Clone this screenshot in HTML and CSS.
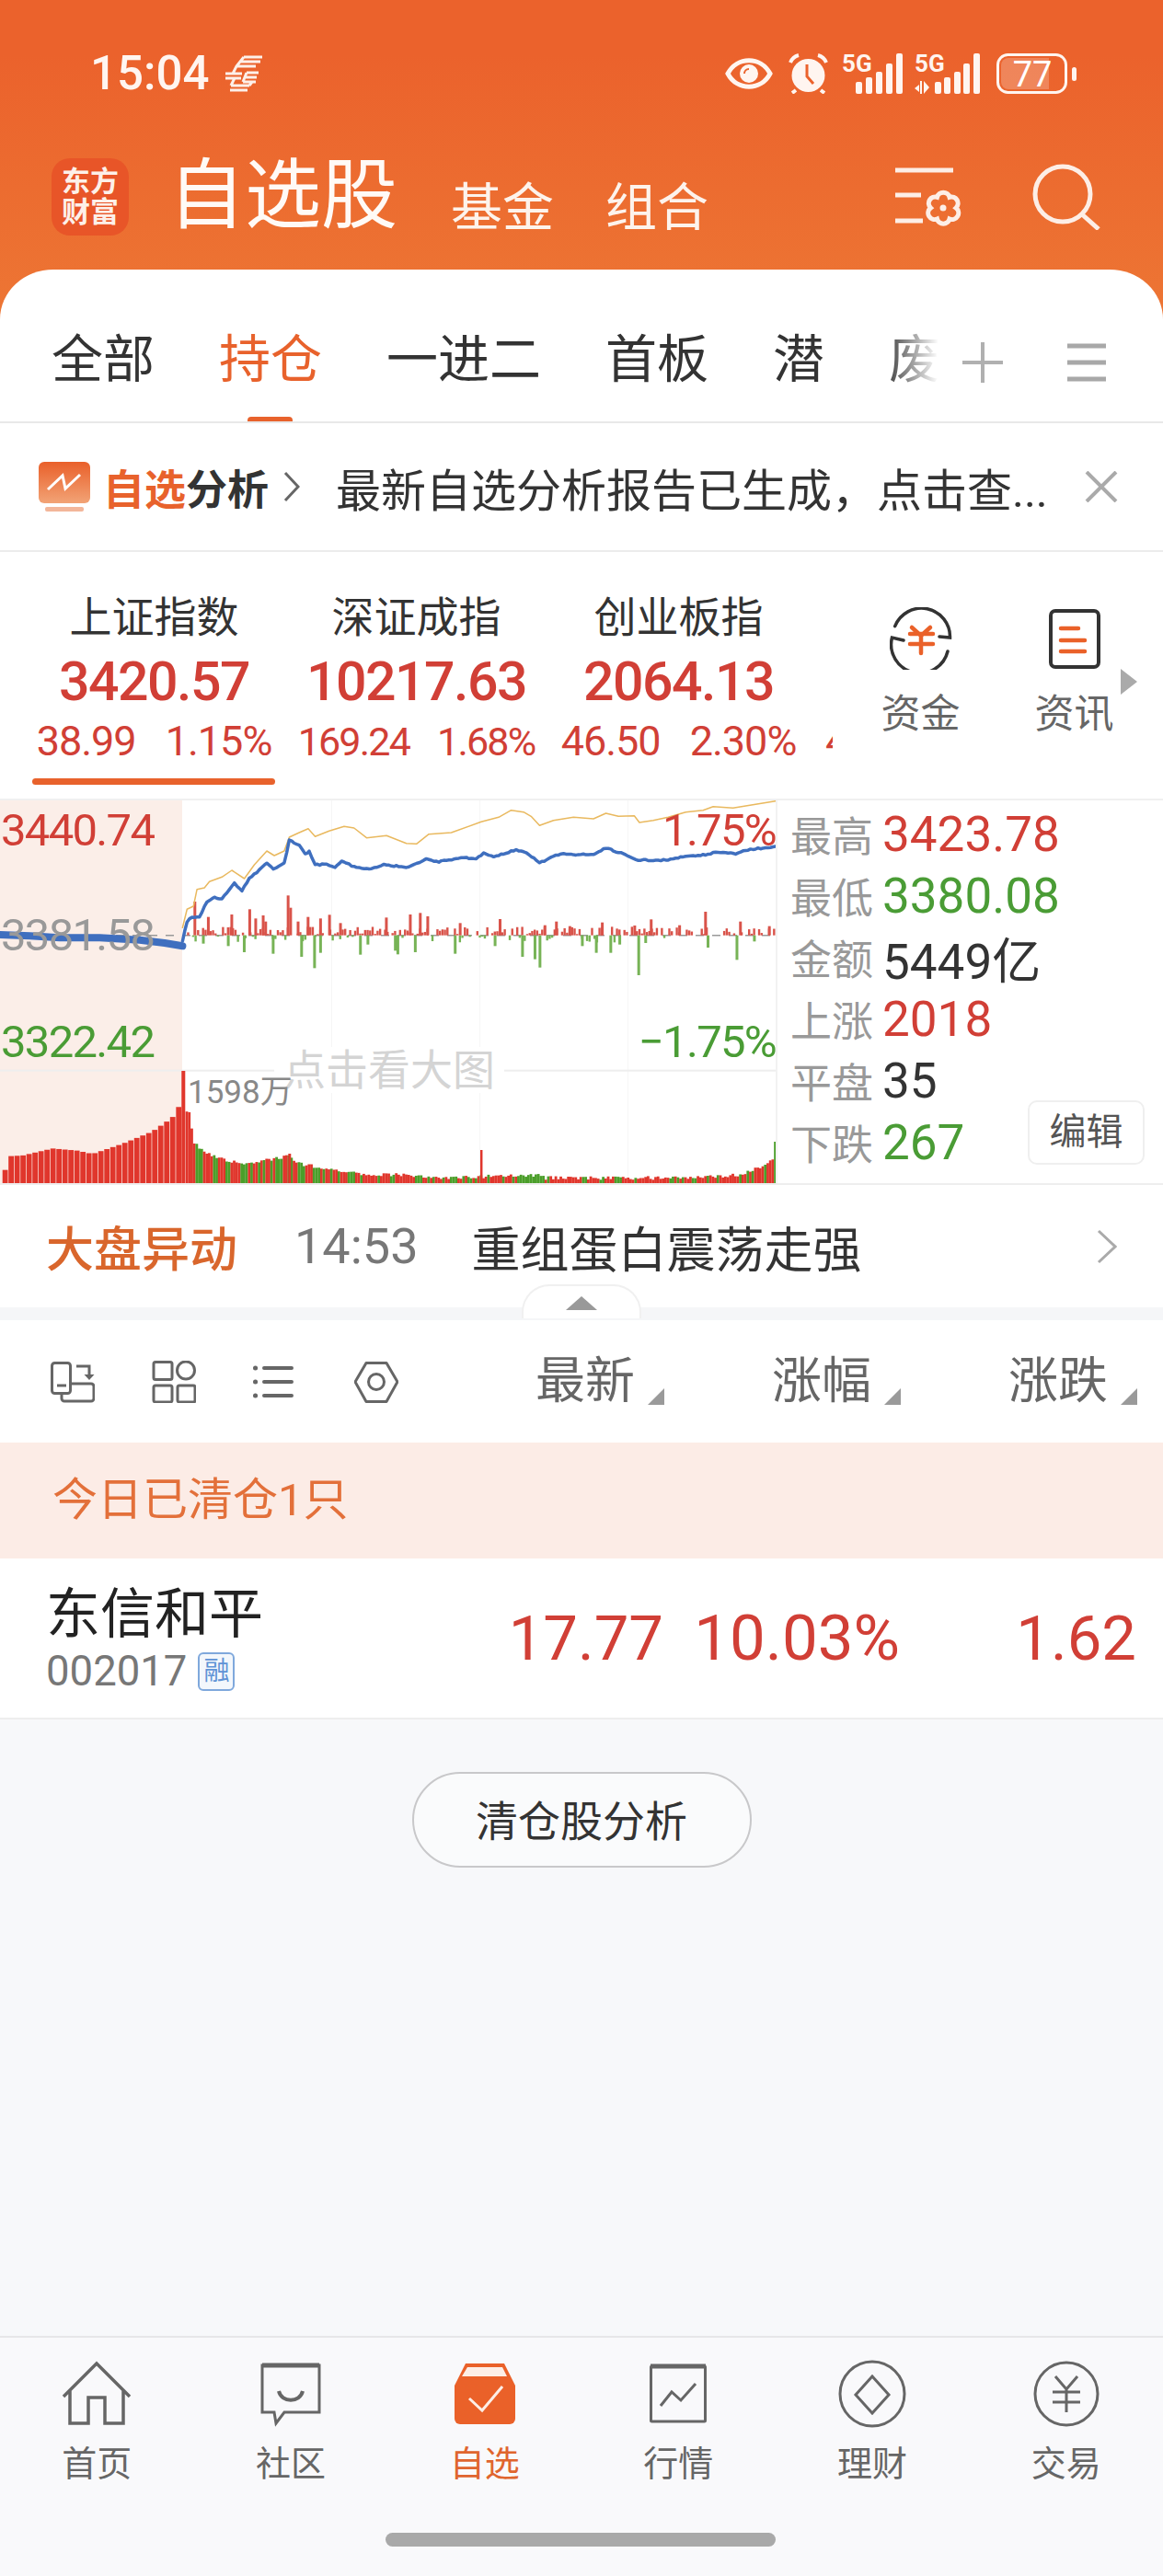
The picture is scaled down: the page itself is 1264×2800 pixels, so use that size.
FILE: index.html
```html
<!DOCTYPE html>
<html lang="zh-CN">
<head>
    <meta charset="UTF-8">
    <title>自选股</title>
    <link rel="stylesheet" href="styles.css">
</head>
<body>
<div id="page">
    <div id="head">
        <div id="status">
            <div class="status-left">
                <span class="clock-text">15:04</span>
                <svg width="42" height="40" viewBox="0 0 42 40" fill="none" stroke="#fdf0e9" stroke-width="3">
                    <path d="M21 2H41M17 7H39M13 12H34M21 2L13 12L9 20M1 20H19M1 25H18M24 19H37M22 24H35M20 29H34M24 19L20 29M7 33H27M6 38H25M27 33L30 29M7 33L11 25"/>
                </svg>
            </div>
            <div class="status-right">
                <svg class="icon-eye" width="52" height="36" viewBox="0 0 52 36" fill="none">
                    <path d="M3 18C13 -1 39 -1 49 18C39 37 13 37 3 18Z" stroke="#fff5f0" stroke-width="5"/>
                    <circle cx="26" cy="18" r="10" fill="#fff5f0"/>
                    <path d="M21 18A5 5 0 0 1 26 13" stroke="#eb622c" stroke-width="2"/>
                </svg>
                <svg class="icon-alarm" width="43" height="44" viewBox="0 0 43 44" fill="none">
                    <circle cx="21.500" cy="24" r="18" fill="#fff5f0"/>
                    <path d="M2 10C4 5 7 3 11 2M41 10C39 5 36 3 32 2M8 40L4 43M35 40L39 43" stroke="#fff5f0" stroke-width="4"/>
                    <path d="M20 12V25L27 33" stroke="#eb622c" stroke-width="3"/>
                </svg>
                <svg class="icon-net" width="66" height="52" viewBox="0 -4 66 52" fill="#fff5f0">
                    <text x="0" y="20" class="net-text">5G</text>
                    <rect x="15" y="31" width="7" height="13" rx="2"/>
                    <rect x="26" y="26" width="7" height="18" rx="2"/>
                    <rect x="37" y="20" width="7" height="24" rx="2"/>
                    <rect x="48" y="11" width="7" height="33" rx="2"/>
                    <rect x="59" y="0" width="7" height="44" rx="2"/>
                </svg>
                <svg class="icon-net" width="71" height="52" viewBox="0 -4 71 52" fill="#fff5f0">
                    <text x="0" y="20" class="net-text">5G</text>
                    <path d="M6 30V44H8V30ZM5 34L0 38L5 42ZM10 30V44L16 37Z"/>
                    <rect x="22" y="31" width="7" height="13" rx="2"/>
                    <rect x="32" y="26" width="7" height="18" rx="2"/>
                    <rect x="43" y="20" width="7" height="24" rx="2"/>
                    <rect x="53" y="11" width="7" height="33" rx="2"/>
                    <rect x="64" y="0" width="7" height="44" rx="2"/>
                </svg>
                <svg class="icon-batt" width="87" height="44" viewBox="0 0 87 44" fill="none">
                    <rect x="1.500" y="1.500" width="74" height="41" rx="11" stroke="#fff5f0" stroke-width="3"/>
                    <path d="M13 5H57V39H13A8 8 0 0 1 5 31V13A8 8 0 0 1 13 5Z" fill="#fff" fill-opacity="0.22"/>
                    <text x="39" y="36" text-anchor="middle" class="batt-text">77</text>
                    <rect x="82" y="15" width="5" height="15" rx="2.500" fill="#fff5f0"/>
                </svg>
            </div>
        </div>
        <div id="nav">
            <div class="logo">东方<br>财富</div>
            <div class="nav-title">自选股</div>
            <div class="nav-link">基金</div>
            <div class="nav-link">组合</div>
            <svg class="nav-settings" width="74" height="66" viewBox="0 0 74 66" fill="none" stroke="#fdeee6" stroke-width="5">
                <path d="M0 3H63M0 30H28M0 58H30"/>
                <path transform="translate(32 24)" d="M34 20A7 7 0 0 1 27 32A7 7 0 0 1 13.500 32A7 7 0 0 1 6.500 20A7 7 0 0 1 13.500 8.300A7 7 0 0 1 27 8.300A7 7 0 0 1 34 20Z"/>
                <circle cx="52" cy="44" r="3.500" fill="#fdeee6" stroke="none"/>
            </svg>
            <svg class="nav-search" width="74" height="72" viewBox="0 0 74 72" fill="none" stroke="#fdeee6" stroke-width="5">
                <circle cx="33" cy="33" r="30"/>
                <path d="M54 55L72 71"/>
            </svg>
        </div>
        <div id="tabs">
            <div class="tab-list">
                <span class="tab">全部</span>
                <span class="tab tab-active">持仓</span>
                <span class="tab">一进二</span>
                <span class="tab">首板</span>
                <span class="tab">潜</span>
                <span class="tab">废</span>
            </div>
            <svg class="tab-add" width="44" height="44" viewBox="0 0 44 44" stroke="#b0b0b0" stroke-width="4"><path d="M0 22H44M22 0V44"/></svg>
            <svg class="tab-menu" width="42" height="42" viewBox="0 0 42 42" stroke="#a8a8a8" stroke-width="5"><path d="M0 3H42M0 21H42M0 39H42"/></svg>
        </div>
    </div>

    <div id="notice">
        <svg class="notice-icon" width="56" height="54" viewBox="0 0 56 54" fill="none">
            <defs>
                <linearGradient id="notice-fill" x1="0" y1="0" x2="0" y2="1">
                    <stop offset="0" stop-color="#e9602a"/>
                    <stop offset="1" stop-color="#f2a376"/>
                </linearGradient>
            </defs>
            <rect width="56" height="45" rx="6" fill="url(#notice-fill)"/>
            <path d="M10 30L26 15L29 29L45 14" stroke="#fff" stroke-width="3"/>
            <rect x="7" y="49" width="42" height="5" rx="2" fill="#f3b69a"/>
        </svg>
        <span class="notice-brand"><em>自选</em>分析</span>
        <svg class="notice-arrow" width="18" height="34" viewBox="0 0 18 34" fill="none" stroke="#666" stroke-width="3"><path d="M2 2L16 17L2 32"/></svg>
        <span class="notice-text">最新自选分析报告已生成，点击查...</span>
        <svg class="notice-close" width="36" height="34" viewBox="0 0 36 34" stroke="#aaa" stroke-width="4"><path d="M2 1L34 33M34 1L2 33"/></svg>
    </div>

    <div id="indexes">
        <div class="index-list">
            <div class="index-item index-active">
                <div class="index-name">上证指数</div>
                <div class="index-price">3420.57</div>
                <div class="index-sub"><span>38.99</span><span>1.15%</span></div>
            </div>
            <div class="index-item">
                <div class="index-name">深证成指</div>
                <div class="index-price">10217.63</div>
                <div class="index-sub index-sub-small"><span>169.24</span><span>1.68%</span></div>
            </div>
            <div class="index-item">
                <div class="index-name">创业板指</div>
                <div class="index-price">2064.13</div>
                <div class="index-sub"><span>46.50</span><span>2.30%</span></div>
            </div>
            <div class="index-item index-cut">
                <div class="index-sub"><span>4</span></div>
            </div>
        </div>
        <div class="quick-link">
            <svg width="68" height="68" viewBox="0 0 68 68" fill="none" stroke="#333" stroke-width="3.500" stroke-linecap="round">
                <path d="M5.700 20.700A31 31 0 0 1 65.500 33L54 32M63 48A31 31 0 0 1 2.500 33L15 36"/>
                <path d="M24 22L34 31L44 22M22 29H47M22 40H47M34 31V50" stroke="#ea6129" stroke-width="4.500"/>
            </svg>
            <span>资金</span>
        </div>
        <div class="quick-link">
            <svg width="56" height="68" viewBox="0 0 56 68" fill="none">
                <rect x="2" y="4" width="52" height="61" rx="5" stroke="#333" stroke-width="4"/>
                <path d="M13 23H32M13 36H39M13 48H39" stroke="#ea6129" stroke-width="4.500" stroke-linecap="round"/>
            </svg>
            <span>资讯</span>
        </div>
        <div class="index-more"></div>
    </div>

    <div id="market">
        <div id="chart">
            <svg id="chart-svg" width="843" height="416" viewBox="0 0 843 416"></svg>
            <span class="chart-label label-high red">3440.74</span>
            <span class="chart-label label-mid">3381.58</span>
            <span class="chart-label label-low green">3322.42</span>
            <span class="chart-label pct-high red">1.75%</span>
            <span class="chart-label pct-low green">−1.75%</span>
            <span class="chart-tip">点击看大图</span>
            <span class="chart-vol">1598万</span>
        </div>
        <div id="stats">
            <div class="stat"><span class="stat-name">最高</span><span class="red">3423.78</span></div>
            <div class="stat"><span class="stat-name">最低</span><span class="green">3380.08</span></div>
            <div class="stat"><span class="stat-name">金额</span><span>5449亿</span></div>
            <div class="stat"><span class="stat-name">上涨</span><span class="red">2018</span></div>
            <div class="stat"><span class="stat-name">平盘</span><span>35</span></div>
            <div class="stat"><span class="stat-name">下跌</span><span class="green">267</span></div>
            <div class="edit-button">编辑</div>
        </div>
    </div>

    <div id="alert">
        <span class="alert-title">大盘异动</span>
        <span class="alert-time">14:53</span>
        <span class="alert-text">重组蛋白震荡走强</span>
        <svg class="alert-arrow" width="22" height="38" viewBox="0 0 22 38" fill="none" stroke="#aaa" stroke-width="3"><path d="M2 2L20 19L2 36"/></svg>
    </div>
    <div id="strip">
        <div class="collapse"><i></i></div>
    </div>

    <div id="toolbar">
        <svg width="48" height="46" viewBox="0 0 48 46" fill="none" stroke="#666" stroke-width="3">
            <rect x="1.500" y="2.500" width="20" height="33" rx="3"/>
            <path d="M7 27H17"/>
            <path d="M22 25H44A3 3 0 0 1 47 28V41A3 3 0 0 1 44 44H15A3 3 0 0 1 12 41V36"/>
            <path d="M28 6H42V16"/>
            <path d="M36.500 15H47.500L42 21Z" fill="#666" stroke="none"/>
        </svg>
        <svg width="48" height="46" viewBox="0 0 48 46" fill="none" stroke="#666" stroke-width="3">
            <rect x="2" y="1.500" width="20" height="19" rx="2"/>
            <circle cx="37" cy="10.500" r="9.500"/>
            <rect x="2" y="27" width="20" height="18" rx="2"/>
            <rect x="28" y="27" width="19" height="18" rx="2"/>
        </svg>
        <svg width="48" height="46" viewBox="0 0 48 46" fill="none" stroke="#666" stroke-width="4" stroke-linecap="round">
            <path d="M12 8H42M12 23H42M12 38H42"/>
            <path d="M2.500 8H2.600M2.500 23H2.600M2.500 38H2.600" stroke-width="5"/>
        </svg>
        <svg width="48" height="46" viewBox="0 0 48 46" fill="none" stroke="#666" stroke-width="3">
            <path d="M13 2.500H35L47 23L35 44.500H13L1 23Z" stroke-linejoin="round"/>
            <circle cx="24" cy="23" r="8.500"/>
        </svg>
        <div class="sort-list">
            <span class="sort">最新</span>
            <span class="sort">涨幅</span>
            <span class="sort">涨跌</span>
        </div>
    </div>

    <div id="cleared">今日已清仓1只</div>

    <div id="stock">
        <div class="stock-name">
            <div class="stock-title">东信和平</div>
            <div class="stock-code">002017<span class="stock-tag">融</span></div>
        </div>
        <div class="stock-value">17.77</div>
        <div class="stock-value stock-value-wide">10.03%</div>
        <div class="stock-value">1.62</div>
    </div>

    <div id="content">
        <div class="analysis-button">清仓股分析</div>
    </div>

    <div id="tabbar">
        <div class="bar-item">
            <svg width="76" height="70" viewBox="0 0 76 70" fill="none" stroke="#666" stroke-width="3.500">
                <path d="M2 38L38 2L74 38M9 31V67H29V39H47V67H67V31"/>
            </svg>
            <span>首页</span>
        </div>
        <div class="bar-item">
            <svg width="66" height="70" viewBox="0 0 66 70" fill="none" stroke="#666" stroke-width="3">
                <path d="M2 4H64V55H26L17 67L15 55H2Z"/>
                <path d="M2 4H64" stroke-width="5"/>
                <path d="M17 34C20 47 40 47 43 34" stroke-width="4" transform="translate(3 -2)"/>
            </svg>
            <span>社区</span>
        </div>
        <div class="bar-item bar-active">
            <svg width="68" height="70" viewBox="0 0 68 70" fill="none">
                <path d="M13 2H55L67 26V62A6 6 0 0 1 61 68H7A6 6 0 0 1 1 62V26Z" fill="#ea6129"/>
                <path d="M15 6H53L58 16H9Z" fill="#fdeee6"/>
                <path d="M17 40L31 53L53 27" stroke="#fdeee6" stroke-width="3"/>
            </svg>
            <span>自选</span>
        </div>
        <div class="bar-item">
            <svg width="62" height="70" viewBox="0 0 62 70" fill="none" stroke="#666" stroke-width="3">
                <rect x="1.500" y="5" width="59" height="60" rx="1"/>
                <path d="M1 5H61" stroke-width="5"/>
                <path d="M12 48L24 33L34 42L50 24"/>
            </svg>
            <span>行情</span>
        </div>
        <div class="bar-item">
            <svg width="74" height="74" viewBox="0 0 74 74" fill="none" stroke="#666" stroke-width="3">
                <circle cx="37" cy="37" r="35"/>
                <path d="M37 18L55 38L37 58L19 38Z"/>
            </svg>
            <span>理财</span>
        </div>
        <div class="bar-item">
            <svg width="72" height="72" viewBox="0 0 72 72" fill="none" stroke="#666" stroke-width="3">
                <circle cx="36" cy="36" r="34"/>
                <path d="M24 17L36 31L48 17M21 34H51M21 45H51M36 31V56"/>
            </svg>
            <span>交易</span>
        </div>
        <div class="home-bar"></div>
    </div>
</div>
<script src="chart.js"></script>
</body>
</html>
```

FILE: styles.css
```css
* {
    box-sizing: border-box;
}

body {
    margin: 0;
    background-color: #f7f8fa;
    color: #333333;
    font-family: Roboto, "Noto Sans CJK SC", sans-serif;
}

#page {
    width: 1264px;
    height: 2800px;
    display: flex;
    flex-direction: column;
    overflow: hidden;
}

.red {
    color: #d13f36;
}

.green {
    color: #4a9c35;
}

/* header */
#head {
    background-color: #ed7634;
    background-image: linear-gradient(#eb622c 60px, #ed7634 350px);
}

#status {
    height: 160px;
    padding: 54px 94px 0 98px;
    display: flex;
    justify-content: space-between;
    align-items: flex-start;
}

.status-left {
    margin-top: 4px;
    display: flex;
    align-items: center;
    gap: 17px;
    height: 44px;
}

.clock-text {
    font-size: 51px;
    font-weight: 500;
    color: #fff5f0;
    line-height: 44px;
}

.status-right {
    display: flex;
    align-items: center;
}

.icon-alarm {
    margin-left: 17px;
}

.icon-net {
    margin-left: 15px;
}

.icon-net + .icon-net {
    margin-left: 13px;
}

.icon-batt {
    margin-left: 18px;
}

.net-text {
    font-family: Roboto, sans-serif;
    font-size: 26px;
    font-weight: 700;
}

.batt-text {
    font-family: Roboto, sans-serif;
    font-size: 38px;
    fill: #fff;
}

#nav {
    height: 133px;
    padding-left: 56px;
    display: flex;
    align-items: flex-start;
}

.logo {
    width: 84px;
    height: 84px;
    margin-top: 12px;
    border-radius: 20px;
    background-color: #e85528;
    color: #fdf0e9;
    font-size: 31px;
    font-weight: 700;
    line-height: 33px;
    text-align: center;
    padding-top: 9px;
}

.nav-title {
    margin-left: 43px;
    margin-top: 11px;
    font-size: 83px;
    line-height: 84px;
    color: #fffaf6;
}

.nav-link {
    margin-left: 58px;
    margin-top: 33px;
    font-size: 56px;
    line-height: 66px;
    color: #fdf3ec;
}

.nav-link + .nav-link {
    margin-left: 56px;
}

.nav-settings {
    margin-left: auto;
    margin-top: 22px;
}

.nav-search {
    margin-left: 75px;
    margin-right: 68px;
    margin-top: 18px;
}

#tabs {
    height: 167px;
    background-color: #ffffff;
    border-radius: 58px 58px 0 0 / 54px 54px 0 0;
    border-bottom: 2px solid #e8e8e8;
    display: flex;
    align-items: center;
    padding-left: 56px;
}

.tab-list {
    width: 964px;
    align-self: stretch;
    padding-top: 63px;
    display: flex;
    align-items: flex-start;
    gap: 70px;
    overflow: hidden;
    position: relative;
}

.tab-list::after {
    content: "";
    position: absolute;
    right: 0;
    top: 0;
    bottom: 0;
    width: 60px;
    background: linear-gradient(to right, rgba(255, 255, 255, 0), #ffffff);
}

.tab {
    flex: none;
    font-size: 56px;
    line-height: 70px;
    color: #333333;
}

.tab-active {
    color: #e8622c;
    position: relative;
}

.tab-active::after {
    content: "";
    position: absolute;
    left: 31px;
    top: 97px;
    width: 49px;
    height: 7px;
    border-radius: 4px 4px 0 0;
    background-color: #e8622c;
}

.tab-add {
    margin-left: 26px;
    margin-top: 36px;
}

.tab-menu {
    margin-left: 70px;
    margin-top: 36px;
}

/* analysis notice */
#notice {
    height: 140px;
    padding-left: 42px;
    border-bottom: 2px solid #ececec;
    display: flex;
    align-items: center;
    background-color: #ffffff;
}

.notice-brand {
    margin-left: 14px;
    font-size: 45px;
    font-weight: 700;
    color: #333333;
}

.notice-brand em {
    font-style: normal;
    color: #e8622c;
}

.notice-arrow {
    margin-left: 16px;
}

.notice-text {
    margin-left: 39px;
    font-size: 49px;
    color: #333333;
}

.notice-close {
    margin-left: auto;
    margin-right: 49px;
}

/* index strip */
#indexes {
    height: 268px;
    display: flex;
    background-color: #ffffff;
    position: relative;
}

.index-list {
    width: 905px;
    padding-left: 25px;
    display: flex;
    overflow: hidden;
    flex: none;
}

.index-item {
    flex: none;
    width: 285px;
    text-align: center;
    position: relative;
}

.index-name {
    margin-top: 43px;
    font-size: 46px;
    line-height: 56px;
    color: #333333;
}

.index-price {
    margin-top: 9px;
    font-size: 59px;
    font-weight: 500;
    letter-spacing: -1.5px;
    line-height: 66px;
    color: #d13f36;
}

.index-sub {
    margin-top: 7px;
    display: flex;
    justify-content: center;
    align-items: baseline;
    gap: 32px;
    font-size: 45px;
    letter-spacing: -1px;
    line-height: 50px;
    color: #d13f36;
}

.index-sub-small {
    font-size: 43px;
    letter-spacing: -1.8px;
    gap: 30px;
}

.index-cut .index-sub {
    margin-top: 181px;
    justify-content: flex-start;
    padding-left: 17px;
}

.index-active::after {
    content: "";
    position: absolute;
    left: 10px;
    width: 264px;
    top: 246px;
    height: 7px;
    border-radius: 4px;
    background-color: #e8622c;
}

.quick-link {
    flex: none;
    width: 165px;
    padding-top: 60px;
    display: flex;
    flex-direction: column;
    align-items: center;
    gap: 24px;
    font-size: 43px;
    line-height: 48px;
    color: #666666;
}

.index-list + .quick-link {
    margin-left: 13px;
}

.quick-link + .quick-link {
    margin-left: 2px;
}

.index-more {
    position: absolute;
    left: 1218px;
    top: 127px;
    border-left: 18px solid #aaaaaa;
    border-top: 14px solid transparent;
    border-bottom: 14px solid transparent;
}

/* market chart */
#market {
    height: 420px;
    border-top: 2px solid #f0f0f0;
    border-bottom: 2px solid #eeeeee;
    display: flex;
    background-color: #ffffff;
}

#chart {
    width: 843px;
    height: 416px;
    flex: none;
    position: relative;
}

#chart-svg {
    display: block;
}

.chart-label {
    position: absolute;
    font-size: 49px;
    letter-spacing: -1.7px;
    line-height: 50px;
}

.label-high {
    left: 1px;
    top: 8px;
}

.label-mid {
    left: 1px;
    top: 122px;
    color: #999999;
}

.label-low {
    left: 1px;
    top: 238px;
}

.pct-high {
    right: 0;
    top: 8px;
}

.pct-low {
    right: 0;
    top: 238px;
}

.chart-tip {
    position: absolute;
    left: 298px;
    top: 268px;
    padding: 0 10px;
    background-color: #ffffff;
    color: #d4d4d4;
    font-size: 46px;
    line-height: 50px;
}

.chart-vol {
    position: absolute;
    left: 204px;
    top: 298px;
    font-size: 35px;
    line-height: 40px;
    color: #888888;
}

#stats {
    flex: 1;
    padding: 3px 0 0 14px;
    border-left: 2px solid #f2f2f2;
    position: relative;
}

.stat {
    height: 67px;
    display: flex;
    align-items: center;
    gap: 10px;
    font-size: 53px;
    color: #333333;
}

.stat-name {
    font-size: 45px;
    color: #999999;
}

.edit-button {
    position: absolute;
    left: 272px;
    top: 326px;
    width: 127px;
    height: 70px;
    border: 2px solid #efefef;
    border-radius: 10px;
    font-size: 40px;
    line-height: 66px;
    text-align: center;
    color: #555555;
}

/* alert row */
#alert {
    height: 133px;
    padding-left: 50px;
    display: flex;
    align-items: center;
    background-color: #ffffff;
}

.alert-title {
    font-size: 52px;
    font-weight: 500;
    color: #d9662c;
}

.alert-time {
    margin-left: 62px;
    font-size: 54px;
    color: #777777;
}

.alert-text {
    margin-left: 58px;
    font-size: 53px;
    color: #333333;
}

.alert-arrow {
    margin-left: auto;
    margin-right: 50px;
}

#strip {
    height: 14px;
    background-color: #f5f6f8;
    position: relative;
}

.collapse {
    position: absolute;
    left: 567px;
    top: -25px;
    width: 130px;
    height: 37px;
    background-color: #ffffff;
    border: 2px solid #f0f0f0;
    border-bottom: none;
    border-radius: 30px 30px 0 0;
}

.collapse i {
    position: absolute;
    left: 46px;
    top: 11px;
    border-bottom: 15px solid #999999;
    border-left: 17px solid transparent;
    border-right: 17px solid transparent;
}

/* list toolbar */
#toolbar {
    height: 133px;
    padding-left: 55px;
    display: flex;
    align-items: center;
    gap: 62px;
    background-color: #ffffff;
}

.sort-list {
    margin-left: 87px;
    display: flex;
    gap: 149px;
}

.sort {
    font-size: 54px;
    line-height: 60px;
    color: #666666;
    position: relative;
}

.sort::after {
    content: "";
    position: absolute;
    left: 122px;
    top: 37px;
    border-bottom: 18px solid #9a9a9a;
    border-left: 18px solid transparent;
}

#cleared {
    height: 126px;
    padding-left: 57px;
    background-color: #fcece6;
    color: #e3703a;
    font-size: 49px;
    line-height: 126px;
}

#stock {
    height: 175px;
    padding: 0 29px 0 50px;
    border-bottom: 2px solid #eeeeee;
    display: flex;
    align-items: center;
    background-color: #ffffff;
}

.stock-name {
    flex: 1;
}

.stock-title {
    font-size: 59px;
    line-height: 70px;
    color: #222222;
}

.stock-code {
    margin-top: 2px;
    font-size: 45.500px;
    line-height: 50px;
    color: #777777;
    display: flex;
    align-items: center;
}

.stock-tag {
    margin-left: 12px;
    width: 40px;
    height: 42px;
    border: 2px solid #7fa8dc;
    border-radius: 6px;
    font-size: 28px;
    line-height: 38px;
    text-align: center;
    color: #5f93d6;
    background-color: #f3f7fc;
}

.stock-value {
    width: 257px;
    text-align: right;
    font-size: 67px;
    color: #d13f36;
}

.stock-value-wide {
    font-size: 69px;
}

#content {
    flex: 1;
    display: flex;
    justify-content: center;
    align-items: flex-start;
    padding-top: 57px;
}

.analysis-button {
    width: 369px;
    height: 104px;
    border: 2px solid #c8c8ca;
    border-radius: 52px;
    background-color: #fafbfc;
    font-size: 46px;
    line-height: 104px;
    text-align: center;
    color: #333333;
}

/* bottom bar */
#tabbar {
    height: 261px;
    padding-top: 24px;
    border-top: 2px solid #e6e6e8;
    background-color: #f9f9fb;
    display: grid;
    grid-template-columns: repeat(6, 1fr);
    align-items: start;
    position: relative;
}

.bar-item {
    display: flex;
    flex-direction: column;
    align-items: center;
    font-size: 38px;
    line-height: 44px;
    color: #666666;
}

.bar-item svg {
    height: 74px;
    margin-bottom: 17px;
}

.bar-active {
    color: #e0652e;
}

.home-bar {
    position: absolute;
    left: 419px;
    top: 212px;
    width: 424px;
    height: 15px;
    border-radius: 8px;
    background-color: #a9a9a9;
}
```

FILE: chart.js
```js
var NS = 'http://www.w3.org/2000/svg';
var svg = document.getElementById('chart-svg');

// points are read off the original chart, x / 1.845 and y / 3 - 10 gives svg pixels
function sx(x) { return x / 1.845; }
function sy(y) { return y / 3 - 10; }

var seed = 17;
function rnd() {
    seed = (seed * 16807) % 2147483647;
    return seed / 2147483647;
}

function add(name, attrs) {
    var el = document.createElementNS(NS, name);
    for (var key in attrs) {
        el.setAttribute(key, attrs[key]);
    }
    svg.appendChild(el);
}

function bar(x, y1, y2, width, color) {
    add('rect', { x: x, y: Math.min(y1, y2), width: width, height: Math.abs(y2 - y1), fill: color });
}

function line(points, width, color, noise) {
    var d = '';
    for (var i = 0; i < points.length - 1; i++) {
        var a = points[i], b = points[i + 1];
        var steps = noise ? Math.max(1, Math.round(sx(b[0] - a[0]) / 2.7)) : 1;
        for (var s = 0; s < steps; s++) {
            var x = sx(a[0] + (b[0] - a[0]) * s / steps);
            var y = sy(a[1] + (b[1] - a[1]) * s / steps) + (noise ? (rnd() - 0.5) * noise : 0);
            d += (d ? 'L' : 'M') + x.toFixed(1) + ' ' + y.toFixed(1);
        }
    }
    d += 'L' + sx(points[points.length - 1][0]).toFixed(1) + ' ' + sy(points[points.length - 1][1]).toFixed(1);
    add('path', { d: d, fill: 'none', stroke: color, 'stroke-width': width, 'stroke-linejoin': 'round', 'stroke-linecap': 'round' });
}

function envelope(points, x) {
    for (var i = 0; i < points.length - 1; i++) {
        if (x >= points[i][0] && x <= points[i + 1][0]) {
            var t = (x - points[i][0]) / (points[i + 1][0] - points[i][0]);
            return points[i][1] + (points[i + 1][1] - points[i][1]) * t;
        }
    }
    return points[points.length - 1][1];
}

// background and grid
add('rect', { x: 0, y: 0, width: 198, height: 416, fill: '#fbeee8' });
[360, 521, 682].forEach(function (x) {
    add('rect', { x: x, y: 0, width: 1, height: 416, fill: '#f6f6f6' });
});
add('path', { d: 'M0 ' + sy(470) + 'H843', stroke: '#999', 'stroke-width': 1.5, 'stroke-dasharray': '9 9' });
add('rect', { x: 0, y: sy(908), width: 843, height: 2, fill: '#eeeeee' });

// buy and sell bars round the middle line
var redBars = [[388,360],[415,410],[462,402],[498,385],[510,415],[525,405],[530,425],[575,340],[580,380],[595,425],[615,410],[640,415],[658,403],[680,430],[772,412],[820,402],[840,397],[855,408],[920,430],[1000,417],[1090,437],[1113,425],[1140,440],[1205,428],[1270,438],[1303,418],[1360,437],[1412,393],[1482,425],[1540,440]];
var greenBars = [[405,497],[455,505],[487,525],[545,530],[602,540],[628,577],[640,527],[720,533],[735,500],[790,520],[795,532],[830,525],[910,530],[990,505],[1045,540],[1070,548],[1080,575],[1165,505],[1193,527],[1222,527],[1240,500],[1278,600],[1292,495],[1417,510],[1475,550],[1510,490]];
for (var fx = 375; fx < 1555; fx += 5) {
    var r = rnd();
    if (r < 0.6) {
        bar(sx(fx), sy(470), sy(470 - 4 - rnd() * 24), 2.4, '#d9534a');
    } else if (fx < 1340 && r < 0.8) {
        bar(sx(fx), sy(470), sy(470 + 4 + rnd() * 20), 2.4, '#77b356');
    }
}
redBars.forEach(function (b) {
    bar(sx(b[0]), sy(470), sy(b[1]), 3, '#d9534a');
});
greenBars.forEach(function (b) {
    bar(sx(b[0]), sy(470), sy(b[1]), 3, '#77b356');
});

// price lines
line([[366,445],[375,385],[388,375],[395,320],[410,315],[420,295],[445,280],[465,258],[490,285],[510,240],[535,195],[550,210],[570,195],[580,150],[600,135],[618,122],[632,148],[660,130],[690,115],[710,120],[735,152],[775,145],[815,170],[835,172],[860,140],[905,135],[965,100],[1000,85],[1025,62],[1050,68],[1065,82],[1082,112],[1110,95],[1150,85],[1190,90],[1215,72],[1240,82],[1272,80],[1282,102],[1310,95],[1340,85],[1375,68],[1410,62],[1430,50],[1470,55],[1555,32]], 1.5, '#e9b95f', 0);
line([[0,468],[60,472],[120,478],[200,478],[280,485],[330,495],[366,505]], 8, '#3f6fbf', 0);
line([[366,490],[375,425],[385,410],[400,410],[415,360],[430,345],[445,352],[470,300],[485,325],[500,285],[535,235],[548,255],[570,235],[580,160],[600,175],[612,205],[620,195],[632,240],[655,238],[672,250],[685,228],[715,250],[740,253],[770,240],[820,248],[855,222],[880,230],[930,215],[955,222],[970,200],[990,215],[1035,190],[1060,205],[1082,235],[1110,210],[1130,205],[1190,208],[1215,185],[1250,205],[1280,225],[1340,225],[1370,212],[1410,208],[1440,198],[1475,203],[1490,193],[1555,180]], 3.5, '#3f6fbf', 1.5);

// volume
var base = sy(1278);
var before = [[5,1235],[15,1190],[40,1188],[100,1165],[150,1172],[180,1183],[240,1150],[300,1110],[340,1065],[364,1000]];
for (var vx = 5; vx < 362; vx += 12) {
    bar(sx(vx), base, sy(envelope(before, vx)), 5.8, '#e0362c');
}
var after = [[372,1040],[378,1040],[385,1135],[400,1160],[435,1190],[480,1210],[520,1200],[580,1185],[600,1210],[660,1225],[700,1240],[800,1245],[860,1255],[1080,1245],[1090,1255],[1400,1255],[1480,1245],[1530,1215],[1548,1190]];
bar(sx(364), base, sy(912), 4, '#e0362c');
for (var ax = 372; ax < 1550; ax += 5) {
    var isGreen = rnd() < (ax > 1035 && ax < 1090 ? 0.95 : ax > 1090 ? 0.2 : 0.45);
    bar(sx(ax), base, sy(envelope(after, ax) + rnd() * 12), 2.8, isGreen ? '#4b9e2a' : '#e0362c');
}
bar(sx(963), base, sy(1170), 2.5, '#e0362c');
bar(sx(578), base, sy(1182), 3, '#e0362c');
bar(sx(1552), base, sy(1143), 2.5, '#4b9e2a');
```
